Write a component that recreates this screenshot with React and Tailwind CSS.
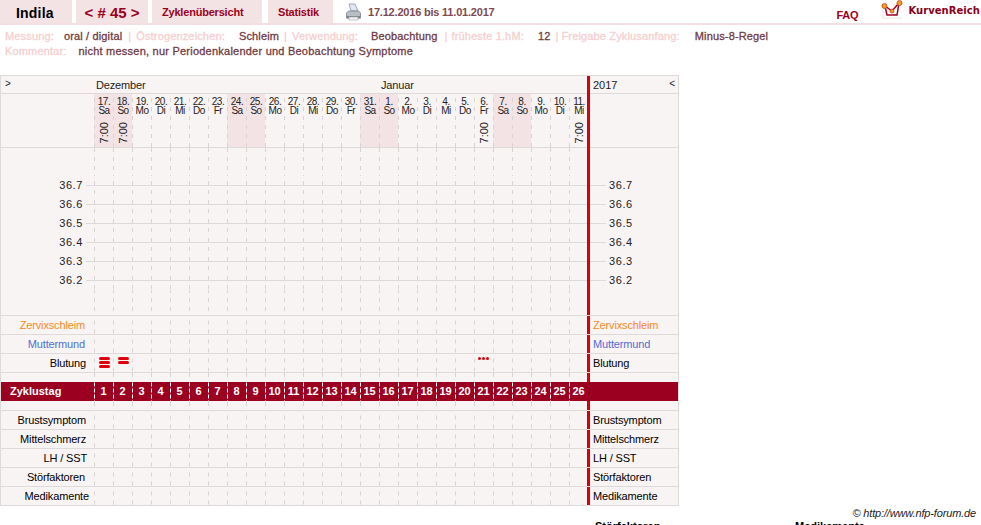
import React from 'react';

const days = [
  ['17.', 'Sa', 1, 1], ['18.', 'So', 1, 1], ['19.', 'Mo'], ['20.', 'Di'], ['21.', 'Mi'], ['22.', 'Do'], ['23.', 'Fr'],
  ['24.', 'Sa', 1], ['25.', 'So', 1], ['26.', 'Mo'], ['27.', 'Di'], ['28.', 'Mi'], ['29.', 'Do'], ['30.', 'Fr'],
  ['31.', 'Sa', 1], ['1.', 'So', 1], ['2.', 'Mo'], ['3.', 'Di'], ['4.', 'Mi'], ['5.', 'Do'], ['6.', 'Fr', 0, 1],
  ['7.', 'Sa', 1], ['8.', 'So', 1], ['9.', 'Mo'], ['10.', 'Di'], ['11.', 'Mi', 0, 1],
];
const temps = ['36.7', '36.6', '36.5', '36.4', '36.3', '36.2'];

const dash = 'bg-[linear-gradient(#d8d4d4_50%,transparent_50%)] bg-[length:1px_9px] bg-repeat-y bg-left';
const redCol = 'w-[91px] -ml-px border-l-[3px] border-[#d8000c]';

const Label = ({ children, className = '' }) => <span className={`text-[#f5cfcf] ${className}`}>{children}</span>;
const Value = ({ children, className = '' }) => <span className={`text-[#6f3c45] ${className}`}>{children}</span>;

const Printer = () => (
  <svg width="15" height="18" viewBox="0 0 15 18" className="ml-[13px] mt-[3px] self-start">
    <path d="M3 1h6l3 7H5z" fill="#dfe8f2" stroke="#8b97a5" strokeWidth="0.8" />
    <path d="M0.5 10l2-2h10l2 2v5h-14z" fill="#b9bec4" stroke="#7c8288" strokeWidth="0.8" />
    <path d="M0.5 13h14v2.5h-14z" fill="#83888e" />
    <path d="M3 14h9v3H3z" fill="#f2f2f2" stroke="#9a9fa5" strokeWidth="0.6" />
  </svg>
);

const Logo = () => (
  <svg width="24" height="20" viewBox="0 0 24 20">
    <path d="M2 9v9h19" fill="none" stroke="#e8e2e2" strokeWidth="1" />
    <path d="M4 6l2 9h10l2-12" fill="#fff" stroke="#a00020" strokeWidth="1.5" />
    <path d="M4 6l7 5 7-8" fill="none" stroke="#a00020" strokeWidth="1.5" />
    <circle cx="3.5" cy="6" r="2.6" fill="#f39a1d" stroke="#b03020" strokeWidth="0.6" />
    <circle cx="11" cy="11" r="2" fill="#f39a1d" stroke="#b03020" strokeWidth="0.6" />
    <circle cx="18.5" cy="3" r="2.6" fill="#f39a1d" stroke="#b03020" strokeWidth="0.6" />
  </svg>
);

// one row of the 26 day columns, empty unless render gives content
const DayCells = ({ render }) => (
  <div className="flex">
    {days.map((d, i) => (
      <div key={i} className={`w-[19px] flex flex-col items-center ${dash}`}>
        {render ? render(i) : null}
      </div>
    ))}
  </div>
);

const Row = ({ label, color = 'text-black', render, right = true, height = 'h-[19px]', pr = 'pr-[8px]' }) => (
  <div className={`flex ${height} border-t border-[#dedada]`}>
    <div className={`w-[93px] ${pr} text-right leading-[19px] tracking-[-0.15px] ${color}`}>{label}</div>
    <DayCells render={render} />
    <div className={`${redCol} pl-[3px] leading-[19px] tracking-[-0.15px] ${color}`}>{right ? label : ''}</div>
  </div>
);

const Spacer = ({ className = '' }) => (
  <div className={`flex ${className}`}>
    <div className="w-[93px]" />
    <DayCells />
    <div className={redCol} />
  </div>
);

const bar = 'block w-[11px] h-[3px] rounded-full bg-[#e0000c]';
const dot = 'block w-[3px] h-[3px] rounded-full bg-[#e0000c]';

const bleeding = (i) => {
  if (i === 0) {
    return (
      <div className="flex flex-col gap-[1px] mt-[3px] ml-[1px]">
        <i className={bar} />
        <i className={bar} />
        <i className={bar} />
      </div>
    );
  }
  if (i === 1) {
    return (
      <div className="flex flex-col gap-[1px] mt-[3px] ml-[1px]">
        <i className={bar} />
        <i className={bar} />
      </div>
    );
  }
  if (i === 20) {
    return (
      <div className="flex gap-[1px] mt-[3px]">
        <i className={dot} />
        <i className={dot} />
        <i className={dot} />
      </div>
    );
  }
  return null;
};

export default function App() {
  return (
    <div className="h-[525px] w-[981px] overflow-hidden bg-white font-['Liberation_Sans',Arial,sans-serif] text-[11px] relative">
      {/* Top tabs */}
      <div className="flex items-stretch h-[25px] border-b-2 border-[#f3dfe1]">
        <div className="w-[72px] bg-[#f3e3e5] text-black font-bold text-[14px] tracking-[0.2px] leading-[26px] pl-[16px]">Indila</div>
        <div className="w-[72px] ml-[4px] bg-[#f3e3e5] text-[#9c0020] font-bold text-[15px] leading-[26px] text-center">&lt; # 45 &gt;</div>
        <div className="w-[110px] ml-[4px] bg-[#f3e3e5] text-[#9c0020] font-bold tracking-[-0.2px] leading-[24px] pl-[10px]">Zyklenübersicht</div>
        <div className="w-[65px] ml-[6px] bg-[#f3e3e5] text-[#9c0020] font-bold tracking-[-0.2px] leading-[24px] pl-[10px]">Statistik</div>
        <Printer />
        <div className="ml-[7px] text-[#7d4a52] font-bold tracking-[-0.2px] leading-[24px]">17.12.2016 bis 11.01.2017</div>
        <div className="ml-auto text-[#9c0020] font-bold tracking-[-0.2px] leading-[30px]">FAQ</div>
        <div className="ml-[23px]"><Logo /></div>
        <div className="ml-[3px] mr-[1px] font-['DejaVu_Sans',sans-serif] font-bold text-[#8a0018] text-[10px] tracking-[0.05px] leading-[21px]">KurvenReich</div>
      </div>

      {/* Cycle info */}
      <div className="pl-[5px] pt-[4px] leading-[15px] whitespace-nowrap tracking-[0.15px] [-webkit-text-stroke:0.3px]">
        <div className="flex">
          <Label>Messung:</Label>
          <Value className="ml-[10px]">oral / digital</Value>
          <Label className="ml-[6px]">|</Label>
          <Label className="ml-[5px]">Östrogenzeichen:</Label>
          <Value className="ml-[14px]">Schleim</Value>
          <Label className="ml-[5px]">|</Label>
          <Label className="ml-[5px]">Verwendung:</Label>
          <Value className="ml-[13px]">Beobachtung</Value>
          <Label className="ml-[7px]">|</Label>
          <Label className="ml-[4px]">früheste 1.hM:</Label>
          <Value className="ml-[14px]">12</Value>
          <Label className="ml-[5px]">|</Label>
          <Label className="ml-[3px]">Freigabe Zyklusanfang:</Label>
          <Value className="ml-[15px]">Minus-8-Regel</Value>
        </div>
        <div className="flex">
          <Label>Kommentar:</Label>
          <Value className="ml-[12px] tracking-[0.23px]">nicht messen, nur Periodenkalender und Beobachtung Symptome</Value>
        </div>
      </div>

      {/* Chart table */}
      <div className="mt-[16px] w-[679px] bg-[#f9f4f4] border border-[#dedada]">
        <div className="flex h-[17px] leading-[19px] text-[#222]">
          <div className="w-[93px] pl-[4px] text-[10px] leading-[15px]">&gt;</div>
          <div className="w-[286px] pl-[2px] tracking-[-0.15px]">Dezember</div>
          <div className="w-[207px] pl-[1px] tracking-[-0.15px]">Januar</div>
          <div className="w-[91px] border-l-[3px] border-[#d8000c] pl-[3px] pr-[3px] flex justify-between">
            <span>2017</span>
            <span className="text-[10px] leading-[15px]">&lt;</span>
          </div>
        </div>

        <div className="flex h-[54px] border-t border-[#dedada]">
          <div className="w-[93px]" />
          <div className="flex">
            {days.map((d, i) => (
              <div key={i} className={`w-[19px] flex flex-col items-center text-[10px] leading-[9px] tracking-[-0.5px] text-[#222] pt-[3px] pl-[1px] ${d[2] ? 'bg-[#f3e3e5]' : ''} ${dash}`}>
                <span>{d[0]}</span>
                <span>{d[1]}</span>
                {d[3] ? (
                  <span className="mt-[7px] text-[11px] leading-[12px] tracking-normal [writing-mode:vertical-rl] rotate-180">7:00</span>
                ) : null}
              </div>
            ))}
          </div>
          <div className={`${redCol} -mt-px`} />
        </div>

        {/* Temperature area */}
        <div className="flex flex-col h-[168px] border-t border-[#dedada]">
          <Spacer className="h-[29px] -mt-px" />
          {temps.map((t) => (
            <div key={t} className="flex h-[19px] leading-[19px] text-[#222] bg-[linear-gradient(#dedada,#dedada)] bg-[length:100%_1px] bg-no-repeat bg-center">
              <div className="w-[93px] flex">
                <span className="w-[85px] pr-[3px] text-right bg-[#f9f4f4] tracking-[0.6px]">{t}</span>
              </div>
              <DayCells />
              <div className={`${redCol} bg-[#f9f4f4]`}>
                <div className="h-full bg-[linear-gradient(#dedada,#dedada)] bg-[length:16px_1px] bg-no-repeat bg-left pl-[19px] tracking-[0.6px]">{t}</div>
              </div>
            </div>
          ))}
          <Spacer className="flex-1" />
        </div>

        <Row label="Zervixschleim" color="text-[#f58a1f]" pr="pr-[9px]" />
        <Row label="Muttermund" color="text-[#4f6fd8]" pr="pr-[9px]" />
        <Row label="Blutung" render={bleeding} />
        <Row label="" right={false} height="h-[10px]" />

        {/* Cycle day band */}
        <div className="flex h-[19px] bg-[#9c0020] text-white font-bold leading-[19px]">
          <div className="w-[93px] pl-[9px]">Zyklustag</div>
          <div className="flex">
            {days.map((d, i) => (
              <div key={i} className="w-[19px] text-center bg-[linear-gradient(#fff_60%,transparent_60%)] bg-[length:1px_6px] bg-repeat-y bg-left">{i + 1}</div>
            ))}
          </div>
        </div>

        <Spacer className="h-[9px]" />

        <Row label="Brustsymptom" />
        <Row label="Mittelschmerz" />
        <Row label="LH / SST" pr="pr-[7px]" />
        <Row label="Störfaktoren" pr="pr-[9px]" />
        <Row label="Medikamente" pr="pr-[5px]" />
      </div>

      <div className="absolute right-[5px] top-[505px] italic text-[#222] tracking-[-0.15px]">© http://www.nfp-forum.de</div>
      <div className="absolute left-[595px] top-[518px] font-bold text-black">Störfaktoren</div>
      <div className="absolute left-[795px] top-[518px] font-bold text-black">Medikamente</div>
    </div>
  );
}
